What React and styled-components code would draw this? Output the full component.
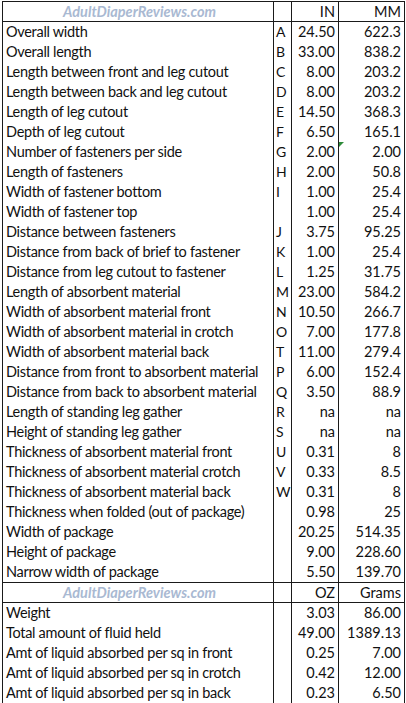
import React from "react";
import styled, { createGlobalStyle } from "styled-components";

const GlobalStyle = createGlobalStyle`
  body {
    margin: 0;
    background: #ffffff;
    font-family: Lato, "Liberation Sans", sans-serif;
    color: #111;
  }
`;

const Sheet = styled.div`
  margin: 1px 0 0 2px;
  width: 401px;
  border: 1px solid #1a1a1a;
`;

const Row = styled.div`
  display: grid;
  grid-template-columns: 270px 18px 47px 66px;
  height: ${(p) => (p.$head ? "19px" : "20px")};
  border-top: ${(p) => (p.$lineTop ? "1px solid #1a1a1a" : "none")};
  border-bottom: ${(p) => (p.$lineBottom ? "1px solid #1a1a1a" : "none")};
`;

const Cell = styled.div`
  position: relative;
  font-size: 14.5px;
  line-height: 20px;
  white-space: nowrap;
  overflow: hidden;
  letter-spacing: ${(p) => (p.$num ? "0" : "-0.3px")};
  padding: ${(p) => (p.$num ? "0 3px 0 0" : "0 0 0 3px")};
  text-align: ${(p) => (p.$num ? "right" : "left")};
  border-left: ${(p) => (p.$first ? "none" : "1px solid #1a1a1a")};
`;

const LetterCell = styled.div`
  font-size: 14px;
  line-height: 20px;
  padding-left: 2px;
  overflow: hidden;
  border-left: 1px solid #1a1a1a;
`;

const Watermark = styled.div`
  font-size: 14.5px;
  line-height: 19px;
  font-weight: 700;
  font-style: italic;
  color: #a9b9d2;
  text-align: center;
  letter-spacing: 0;
`;

const Flag = styled.span`
  position: absolute;
  top: 0;
  left: 0;
  width: 0;
  height: 0;
  border-top: 5px solid #2e8b3a;
  border-right: 5px solid transparent;
`;

const dims = [
  ["Overall width", "A", "24.50", "622.3"],
  ["Overall length", "B", "33.00", "838.2"],
  ["Length between front and leg cutout", "C", "8.00", "203.2"],
  ["Length between back and leg cutout", "D", "8.00", "203.2"],
  ["Length of leg cutout", "E", "14.50", "368.3"],
  ["Depth of leg cutout", "F", "6.50", "165.1"],
  ["Number of fasteners per side", "G", "2.00", "2.00", true],
  ["Length of fasteners", "H", "2.00", "50.8"],
  ["Width of fastener bottom", "I", "1.00", "25.4"],
  ["Width of fastener top", "", "1.00", "25.4"],
  ["Distance between fasteners", "J", "3.75", "95.25"],
  ["Distance from back of brief to fastener", "K", "1.00", "25.4"],
  ["Distance from leg cutout to fastener", "L", "1.25", "31.75"],
  ["Length of absorbent material", "M", "23.00", "584.2"],
  ["Width of absorbent material front", "N", "10.50", "266.7"],
  ["Width of absorbent material in crotch", "O", "7.00", "177.8"],
  ["Width of absorbent material back", "T", "11.00", "279.4"],
  ["Distance from front to absorbent material", "P", "6.00", "152.4"],
  ["Distance from back to absorbent material", "Q", "3.50", "88.9"],
  ["Length of standing leg gather", "R", "na", "na"],
  ["Height of standing leg gather", "S", "na", "na"],
  ["Thickness of absorbent material front", "U", "0.31", "8"],
  ["Thickness of absorbent material crotch", "V", "0.33", "8.5"],
  ["Thickness of absorbent material back", "W", "0.31", "8"],
  ["Thickness when folded (out of package)", "", "0.98", "25"],
  ["Width of package", "", "20.25", "514.35"],
  ["Height of package", "", "9.00", "228.60"],
  ["Narrow width of package", "", "5.50", "139.70"],
];

const weights = [
  ["Weight", "3.03", "86.00"],
  ["Total amount of fluid held", "49.00", "1389.13"],
  ["Amt of liquid absorbed per sq in front", "0.25", "7.00"],
  ["Amt of liquid absorbed per sq in crotch", "0.42", "12.00"],
  ["Amt of liquid absorbed per sq in back", "0.23", "6.50"],
];

const HeadRow = ({ unitA, unitB, lineTop }) => (
  <Row $head $lineTop={lineTop} $lineBottom>
    <Cell $first>
      <Watermark>AdultDiaperReviews.com</Watermark>
    </Cell>
    <LetterCell />
    <Cell $num>{unitA}</Cell>
    <Cell $num>{unitB}</Cell>
  </Row>
);

const App = () => {
  return (
    <>
      <GlobalStyle />
      <Sheet>
        <HeadRow unitA="IN" unitB="MM" />
        {dims.map(([label, letter, inch, mm, flag]) => (
          <Row key={label}>
            <Cell $first>{label}</Cell>
            <LetterCell>{letter}</LetterCell>
            <Cell $num>{inch}</Cell>
            <Cell $num>
              {flag && <Flag />}
              {mm}
            </Cell>
          </Row>
        ))}
        <HeadRow unitA="OZ" unitB="Grams" lineTop />
        {weights.map(([label, oz, grams]) => (
          <Row key={label}>
            <Cell $first>{label}</Cell>
            <LetterCell />
            <Cell $num>{oz}</Cell>
            <Cell $num>{grams}</Cell>
          </Row>
        ))}
      </Sheet>
    </>
  );
};

export default App;
